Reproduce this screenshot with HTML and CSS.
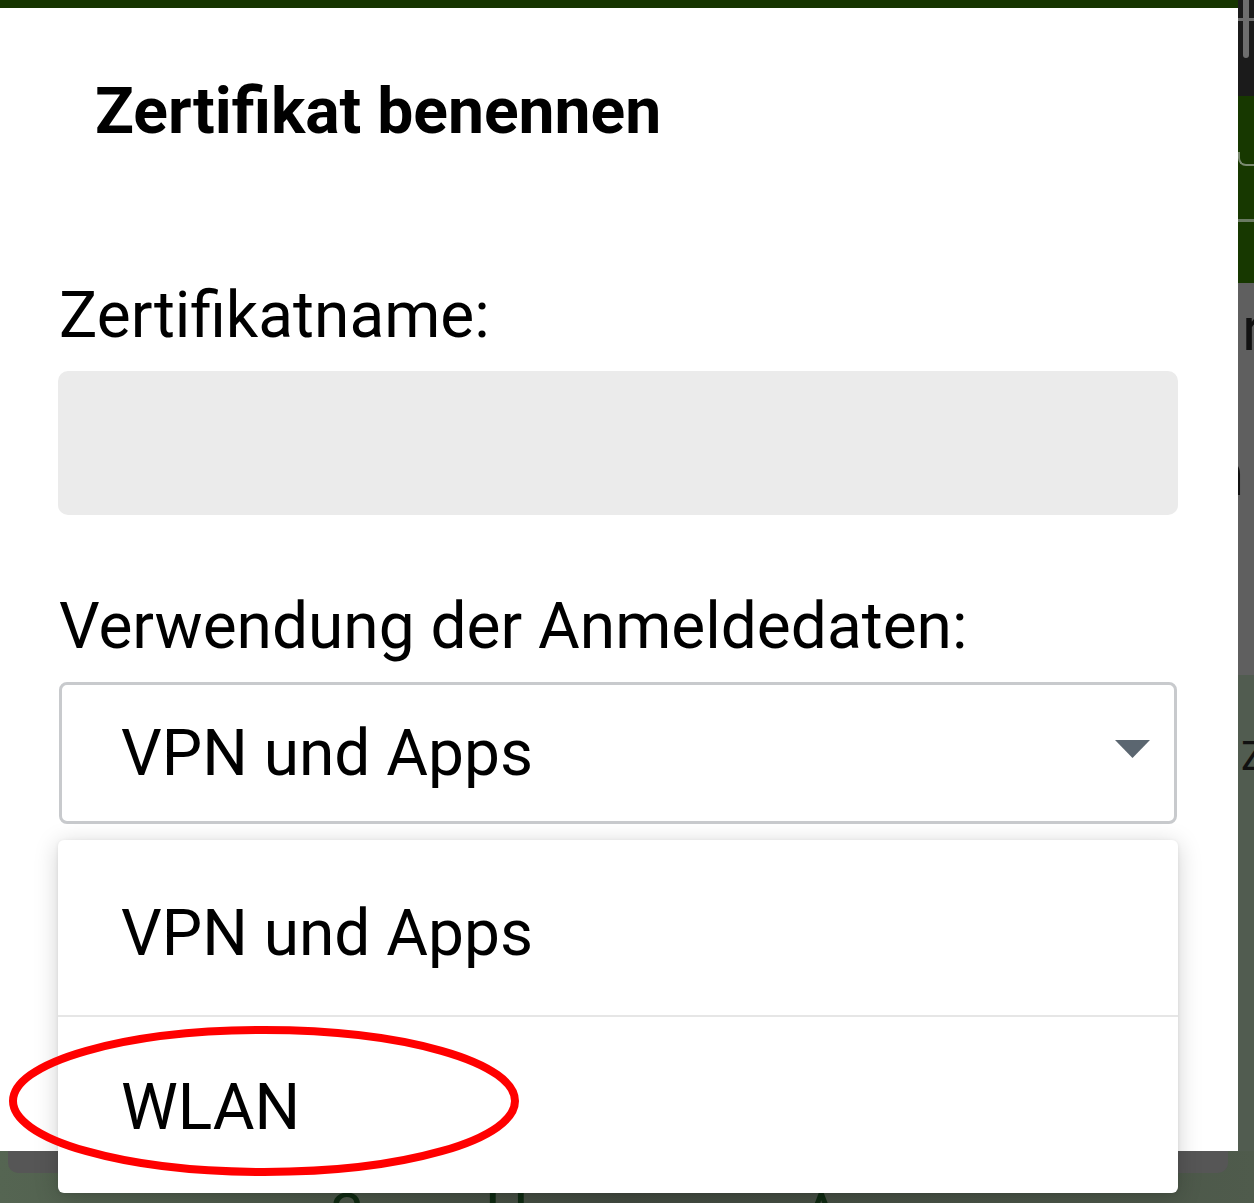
FILE: index.html
```html
<!DOCTYPE html>
<html lang="de">
<head>
<meta charset="utf-8">
<title>Zertifikat benennen</title>
<link rel="stylesheet" href="styles.css">
</head>
<body>
<div class="screen">
  <div class="topbar"></div>
  <div class="main">
    <div class="dialog">
      <h1 class="title">Zertifikat benennen</h1>
      <div class="label">Zertifikatname:</div>
      <div class="input"></div>
      <div class="label label2">Verwendung der Anmeldedaten:</div>
      <div class="select">
        <span class="select-text">VPN und Apps</span>
        <svg class="caret" width="35" height="18" viewBox="0 0 35 18"><path d="M0 0 L35 0 L17.5 18 Z" fill="#5b6670"/></svg>
      </div>
    </div>
    <div class="strip">
      <div class="strip-dark"><span class="sb-v"></span><span class="sb-h"></span></div>
      <div class="strip-green"><span class="g-curve"></span><span class="g-line"></span></div>
      <div class="strip-gray"><span class="frag f1">r</span><span class="frag f2">n</span></div>
      <div class="strip-olive"><span class="frag f3">Z</span></div>
    </div>
  </div>
  <div class="below">
    <div class="below-bar"></div>
    <div class="below-text">3<span class="gap"></span>Hausmann A-</div>
  </div>

  <div class="menu">
    <div class="menu-item first">VPN und Apps</div>
    <div class="menu-item second">WLAN</div>
  </div>
  <svg class="circle" width="512" height="152" viewBox="0 0 512 152"><ellipse cx="256" cy="76" rx="251" ry="71" fill="none" stroke="#ff0000" stroke-width="8"/></svg>
</div>
</body>
</html>
```

FILE: styles.css
```css
* { box-sizing: border-box; }
html, body { margin: 0; padding: 0; }
body {
  width: 1254px;
  height: 1203px;
  overflow: hidden;
  font-family: Roboto, "Liberation Sans", sans-serif;
  background: #4b5549;
}
.screen {
  position: relative;
  width: 1254px;
  height: 1203px;
  display: flex;
  flex-direction: column;
}
.topbar {
  height: 8px;
  background: #163500;
  flex: none;
  margin-right: 16px;
}
.main {
  display: flex;
  height: 1143px;
  flex: none;
}
.dialog {
  width: 1238px;
  background: #ffffff;
  padding: 63px 60px 0 58px;
  display: flex;
  flex-direction: column;
}
.title {
  margin: 0 0 125px 37px;
  font-size: 64.2px;
  line-height: 80px;
  font-weight: 700;
  color: #000;
}
.label {
  font-size: 64px;
  line-height: 80px;
  color: #000;
  margin-left: 1px;
}
.label2 {
  line-height: 76px;
  margin-top: 74px;
  white-space: nowrap;
}
.input {
  margin-top: 15px;
  height: 144px;
  background: #ebebeb;
  border-radius: 10px;
}
.select {
  margin-top: 17px;
  margin-left: 1px;
  margin-right: 1px;
  height: 142px;
  border: 3px solid #c8cacd;
  border-radius: 8px;
  display: flex;
  align-items: center;
  justify-content: space-between;
  padding: 0 24px 0 59px;
}
.select-text {
  font-size: 64px;
  color: #000;
  line-height: 76px;
  margin-top: 2px;
}
.caret { margin-top: -8px; }

.strip {
  width: 16px;
  display: flex;
  flex-direction: column;
  margin-top: -8px;
  height: 1151px;
  overflow: hidden;
}
.strip-dark {
  height: 96px;
  background: #1b1b1b;
  position: relative;
}
.sb-v {
  position: absolute;
  left: 5px; top: 0;
  width: 6px; height: 58px;
  background: #6e6e6e;
  border-radius: 0 0 3px 3px;
}
.sb-h {
  position: absolute;
  left: 0; top: 18px;
  width: 16px; height: 3px;
  background: #6e6e6e;
}
.strip-green {
  height: 187px;
  background: #173800;
  position: relative;
}
.g-curve {
  position: absolute;
  left: 0; top: 56px;
  width: 16px; height: 14px;
  border-left: 2px solid #7a8a70;
  border-bottom: 2px solid #7a8a70;
  border-radius: 0 0 0 8px;
}
.g-line {
  position: absolute;
  left: 0; top: 123px;
  width: 16px; height: 3px;
  background: #6a7a62;
}
.strip-gray {
  height: 392px;
  background: #5f5f5f;
  position: relative;
}
.strip-olive {
  flex: 1;
  background: #515c50;
  position: relative;
}
.frag {
  position: absolute;
  font-size: 62px;
  line-height: 1;
  color: #111;
}
.f1 { left: 4px; top: 15px; }
.f2 { left: -28px; top: 160px; }
.f3 { left: 3px; top: 62px; font-size: 40px; }

.below {
  flex: 1;
  background: linear-gradient(90deg, #556552 0%, #424a40 50%, #4f5b4c 100%);
  position: relative;
  overflow: hidden;
}
.below-bar {
  margin: 0 26px 0 8px;
  height: 22px;
  background: #565656;
  border-radius: 0 0 10px 10px;
}
.below-text {
  position: absolute;
  left: 330px;
  top: 34px;
  font-size: 62px;
  line-height: 1;
  color: #0f2a12;
  white-space: nowrap;
}
.gap { display: inline-block; width: 120px; }

.menu {
  position: absolute;
  left: 58px;
  top: 840px;
  width: 1120px;
  height: 353px;
  background: #fff;
  border-radius: 6px;
  box-shadow: 0 4px 24px rgba(0,0,0,0.18), 0 1px 4px rgba(0,0,0,0.08);
  display: flex;
  flex-direction: column;
}
.menu-item {
  font-size: 64px;
  line-height: 76px;
  color: #000;
  padding-left: 63px;
}
.menu-item.first {
  height: 177px;
  padding-top: 56px;
  border-bottom: 2px solid #e6e6e6;
}
.menu-item.second {
  padding-top: 53px;
}
.circle {
  position: absolute;
  left: 8px;
  top: 1025px;
}
```
